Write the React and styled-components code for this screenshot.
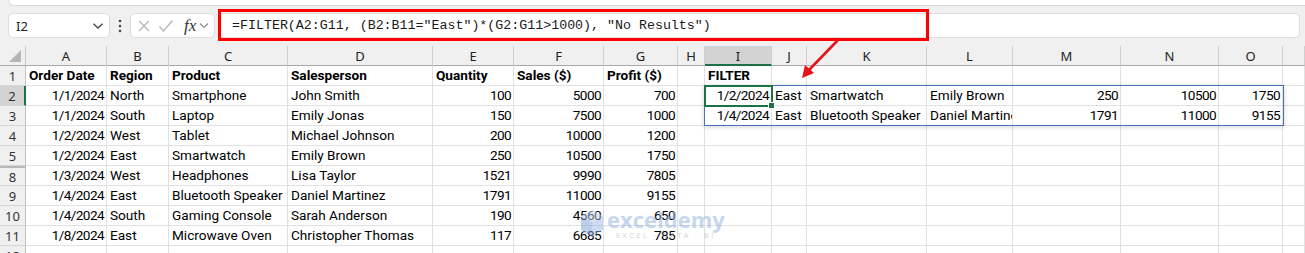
import React from "react";
import styled, { createGlobalStyle } from "styled-components";

const GlobalStyle = createGlobalStyle`
  html, body {
    margin: 0;
    padding: 0;
    background: #ffffff;
  }
  body {
    overflow: hidden;
  }
`;

const CELL_FONT = `"Roboto", "Liberation Sans", sans-serif`;
const UI_FONT = `"Noto Sans", "Open Sans", sans-serif`;

const COLS = [
  { key: "A", w: 81 },
  { key: "B", w: 62 },
  { key: "C", w: 119 },
  { key: "D", w: 145 },
  { key: "E", w: 81 },
  { key: "F", w: 90 },
  { key: "G", w: 74 },
  { key: "H", w: 27 },
  { key: "I", w: 67 },
  { key: "J", w: 35 },
  { key: "K", w: 120 },
  { key: "L", w: 86 },
  { key: "M", w: 108 },
  { key: "N", w: 98 },
  { key: "O", w: 64 },
  { key: "", w: 0 },
];

const EMPTY = ["", "", "", "", "", "", "", ""];
const HEAD = ["Order Date", "Region", "Product", "Salesperson", "Quantity", "Sales ($)", "Profit ($)", ""];

// [row number, cells A..P]; numbers and dates are right aligned
const ROWS = [
  [1, [...HEAD, "FILTER", "", "", "", "", "", "", ""], true],
  [2, ["1/1/2024", "North", "Smartphone", "John Smith", 100, 5000, 700, "", "1/2/2024", "East", "Smartwatch", "Emily Brown", 250, 10500, 1750, ""]],
  [3, ["1/1/2024", "South", "Laptop", "Emily Jonas", 150, 7500, 1000, "", "1/4/2024", "East", "Bluetooth Speaker", "Daniel Martinez", 1791, 11000, 9155, ""]],
  [4, ["1/2/2024", "West", "Tablet", "Michael Johnson", 200, 10000, 1200, "", ...EMPTY]],
  [5, ["1/2/2024", "East", "Smartwatch", "Emily Brown", 250, 10500, 1750, "", ...EMPTY]],
  [8, ["1/3/2024", "West", "Headphones", "Lisa Taylor", 1521, 9990, 7805, "", ...EMPTY]],
  [9, ["1/4/2024", "East", "Bluetooth Speaker", "Daniel Martinez", 1791, 11000, 9155, "", ...EMPTY]],
  [10, ["1/4/2024", "South", "Gaming Console", "Sarah Anderson", 190, 4560, 650, "", ...EMPTY]],
  [11, ["1/8/2024", "East", "Microwave Oven", "Christopher Thomas", 117, 6685, 785, "", ...EMPTY]],
  [12, [...EMPTY, ...EMPTY]],
];

const isRight = (v) => typeof v === "number" || /^\d+\/\d+\/\d{4}$/.test(v);

const Page = styled.div`
  position: relative;
  width: 1305px;
  height: 253px;
  overflow: hidden;
  background: #ffffff;
`;

const Top = styled.div`
  background: #f0f0f0;
  height: 46px;
  box-sizing: border-box;
`;

const RibbonEdge = styled.div`
  height: 5px;
  margin-left: 8px;
  background: #ffffff;
  border-left: 1px solid #d9d9d9;
  border-bottom: 1px solid #d9d9d9;
  border-bottom-left-radius: 6px;
`;

const FormulaRow = styled.div`
  display: flex;
  align-items: flex-start;
  padding: 7px 5px 0 8px;
`;

const Field = styled.div`
  display: flex;
  align-items: center;
  height: 25px;
  box-sizing: border-box;
  background: #ffffff;
  border: 1px solid #dedede;
  border-radius: 5px;
  width: ${(p) => (p.$w ? `${p.$w}px` : "auto")};
  flex: ${(p) => (p.$grow ? 1 : "none")};
  margin-left: ${(p) => p.$ml || 0}px;
  position: relative;
`;

const NameText = styled.span`
  flex: 1;
  padding-left: 7px;
  font-family: ${UI_FONT};
  font-size: 13px;
  color: #222;
`;

const Dots = styled.div`
  width: 20px;
  height: 25px;
  display: flex;
  align-items: center;
  justify-content: center;
`;

const IconSlot = styled.span`
  display: flex;
  align-items: center;
  justify-content: center;
  width: ${(p) => p.$w}px;
  margin-left: ${(p) => p.$ml || 0}px;
`;

const Fx = styled.span`
  font-family: "Liberation Serif", "DejaVu Serif", serif;
  font-style: italic;
  font-size: 17px;
  color: #333;
  margin-left: 10px;
  line-height: 1;
`;

const FormulaText = styled.span`
  padding-left: 13px;
  font-family: "Liberation Mono", "DejaVu Sans Mono", monospace;
  font-size: 13.3px;
  color: #1a1a1a;
  white-space: pre;
`;

const RedBox = styled.div`
  position: absolute;
  left: -1px;
  top: -5px;
  width: 711px;
  height: 32px;
  box-sizing: border-box;
  border: 3px solid #ff0000;
`;

const Sheet = styled.div`
  position: relative;
  display: grid;
  grid-template-columns: 26px ${COLS.map((c) => (c.w ? `${c.w}px` : "1fr")).join(" ")};
`;

const Corner = styled.div`
  height: 20px;
  box-sizing: border-box;
  background: #f0f0f0;
  border-bottom: 1px solid #a9a9a9;
  border-right: 1px solid #c8c8c8;
  position: relative;
  &::after {
    content: "";
    position: absolute;
    right: 4px;
    bottom: 3px;
    width: 0;
    height: 0;
    border-left: 12px solid transparent;
    border-bottom: 12px solid #b5b5b5;
  }
`;

const ColHead = styled.div`
  height: 20px;
  box-sizing: border-box;
  background: ${(p) => (p.$active ? "#d3d3d3" : "#f0f0f0")};
  border-bottom: ${(p) => (p.$active ? "2px solid #1e7145" : "1px solid #a9a9a9")};
  border-right: 1px solid #cfcfcf;
  display: flex;
  align-items: center;
  justify-content: center;
  font-family: ${UI_FONT};
  font-size: 13px;
  color: #222;
  padding-top: ${(p) => (p.$active ? 2 : 1)}px;
`;

const RowHead = styled.div`
  height: 20px;
  box-sizing: border-box;
  background: ${(p) => (p.$active ? "#d3d3d3" : "#f0f0f0")};
  border-bottom: 1px solid #d6d6d6;
  border-right: ${(p) => (p.$active ? "2px solid #1e7145" : "1px solid #c2c2c2")};
  border-top: ${(p) => (p.$gap ? "2px double #b8b8b8" : "none")};
  display: flex;
  align-items: center;
  justify-content: center;
  font-family: ${UI_FONT};
  font-size: 13px;
  color: #333;
`;

const Cell = styled.div`
  height: 20px;
  box-sizing: border-box;
  border-right: 1px solid #e1e1e1;
  border-bottom: 1px solid #e1e1e1;
  padding: 0 2px 0 3px;
  font-family: ${CELL_FONT};
  font-size: 13.6px;
  line-height: 19px;
  font-weight: ${(p) => (p.$bold ? 700 : 400)};
  letter-spacing: ${(p) => (p.$right ? "-0.6px" : "0")};
  text-align: ${(p) => (p.$right ? "right" : "left")};
  white-space: nowrap;
  overflow: hidden;
  color: #000;
`;

const Spill = styled.div`
  position: absolute;
  left: 704px;
  top: 39px;
  width: 580px;
  height: 41px;
  box-sizing: border-box;
  border: 1px solid #4a72b8;
  box-shadow: 0 1px 5px rgba(0, 0, 0, 0.18);
  pointer-events: none;
`;

const ActiveCell = styled.div`
  position: absolute;
  left: 704px;
  top: 39px;
  width: 69px;
  height: 22px;
  box-sizing: border-box;
  border: 2px solid #1e7145;
  &::after {
    content: "";
    position: absolute;
    right: -4px;
    bottom: -4px;
    width: 5px;
    height: 5px;
    background: #1e7145;
    border: 1px solid #ffffff;
  }
`;

const Watermark = styled.div`
  position: absolute;
  left: 580px;
  top: 162px;
  display: flex;
  align-items: center;
  gap: 3px;
  opacity: 0.5;
  pointer-events: none;
`;

const MarkText = styled.div`
  display: flex;
  flex-direction: column;
  align-items: center;
  line-height: 1;
`;

const MarkName = styled.span`
  font-family: "Open Sans", "Noto Sans", sans-serif;
  font-weight: 700;
  font-size: 22px;
  color: #8fb0e0;
`;

const MarkSub = styled.span`
  font-family: "Open Sans", "Noto Sans", sans-serif;
  font-size: 7.5px;
  letter-spacing: 2.4px;
  color: #a8a8a8;
  margin-top: 2px;
`;

const Arrow = styled.svg`
  position: absolute;
  left: 795px;
  top: 34px;
  pointer-events: none;
`;

const Chevron = () => (
  <svg width="12" height="8" viewBox="0 0 12 8">
    <path d="M1.5 1.8 L6 6 L10.5 1.8" fill="none" stroke="#444" strokeWidth="1.3" />
  </svg>
);

const App = () => {
  return (
    <Page>
      <GlobalStyle />
      <Top>
        <RibbonEdge />
        <FormulaRow>
          <Field $w={102}>
            <NameText>I2</NameText>
            <IconSlot $w={22}>
              <Chevron />
            </IconSlot>
          </Field>
          <Dots>
            <svg width="4" height="14" viewBox="0 0 4 14">
              <circle cx="2" cy="2" r="1.3" fill="#444" />
              <circle cx="2" cy="7" r="1.3" fill="#444" />
              <circle cx="2" cy="12" r="1.3" fill="#444" />
            </svg>
          </Dots>
          <Field $w={85}>
            <IconSlot $w={14} $ml={6}>
              <svg width="14" height="14" viewBox="0 0 14 14">
                <path d="M2 2 L12 12 M12 2 L2 12" stroke="#b3b3b3" strokeWidth="1.2" fill="none" />
              </svg>
            </IconSlot>
            <IconSlot $w={16} $ml={7}>
              <svg width="16" height="14" viewBox="0 0 16 14">
                <path d="M1.5 7.5 L5.5 12 L14.5 1.5" stroke="#b3b3b3" strokeWidth="1.2" fill="none" />
              </svg>
            </IconSlot>
            <Fx>fx</Fx>
            <IconSlot $w={12} $ml={2}>
              <svg width="10" height="7" viewBox="0 0 10 7">
                <path d="M1 1.5 L5 5.5 L9 1.5" fill="none" stroke="#888" strokeWidth="1.1" />
              </svg>
            </IconSlot>
          </Field>
          <Field $grow $ml={3}>
            <FormulaText>=FILTER(A2:G11, (B2:B11="East")*(G2:G11&gt;1000), "No Results")</FormulaText>
            <RedBox />
          </Field>
        </FormulaRow>
      </Top>

      <Sheet>
        <Corner />
        {COLS.map((c) => (
          <ColHead key={c.key || "p"} $active={c.key === "I"}>
            {c.key}
          </ColHead>
        ))}
        {ROWS.map(([num, cells, bold]) => (
          <React.Fragment key={num}>
            <RowHead $active={num === 2} $gap={num === 8}>
              {num}
            </RowHead>
            {cells.map((v, i) => (
              <Cell key={i} $bold={bold} $right={isRight(v)}>
                {v}
              </Cell>
            ))}
          </React.Fragment>
        ))}
        <Spill />
        <ActiveCell />
        <Watermark>
          <svg width="24" height="30" viewBox="0 0 24 30">
            <path d="M12 1 L23 7 L23 21 L12 28 L1 21 L1 7 Z" fill="#9ab8e3" />
            <path d="M12 1 L23 7 L12 13 L1 7 Z" fill="#c3d5ef" />
            <path d="M12 13 L12 28 L1 21 L1 7 Z" fill="#7d9fd6" />
          </svg>
          <MarkText>
            <MarkName>exceldemy</MarkName>
            <MarkSub>EXCEL · DATA · BI</MarkSub>
          </MarkText>
        </Watermark>
      </Sheet>

      <Arrow width="50" height="48" viewBox="0 0 50 48">
        <path d="M43 6 L14 36" stroke="#e8121a" strokeWidth="2.6" fill="none" strokeLinecap="round" />
        <path d="M7 44 L10 31 L19 39 Z" fill="#e8121a" />
      </Arrow>
    </Page>
  );
};

export default App;
